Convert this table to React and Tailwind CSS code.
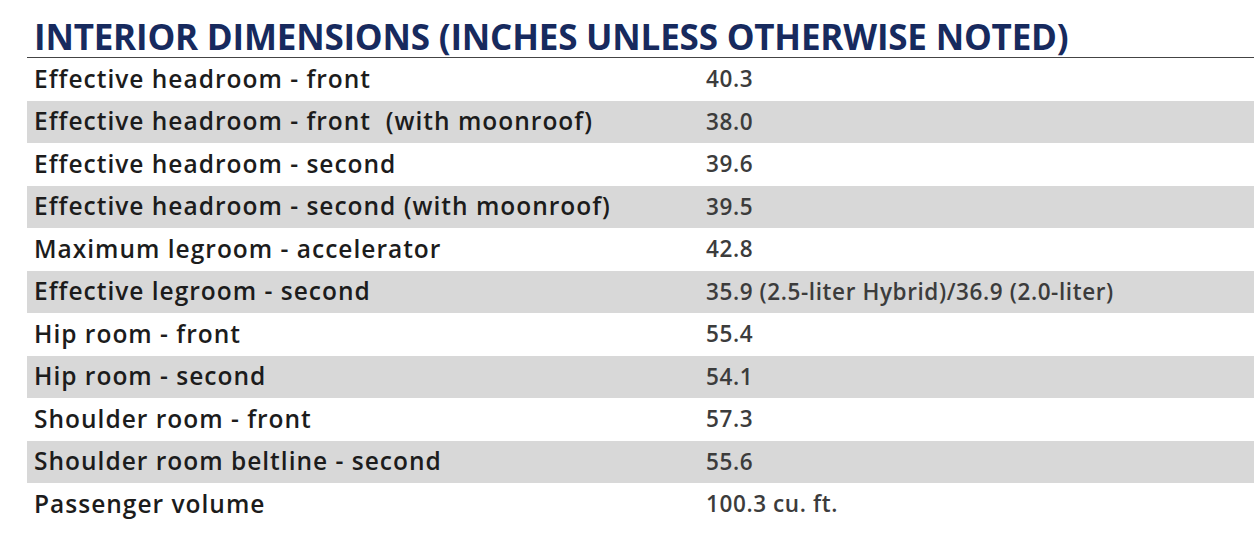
import React from 'react';

const ROWS = [
  ['Effective headroom - front', '40.3'],
  ['Effective headroom - front  (with moonroof)', '38.0'],
  ['Effective headroom - second', '39.6'],
  ['Effective headroom - second (with moonroof)', '39.5'],
  ['Maximum legroom - accelerator', '42.8'],
  ['Effective legroom - second', '35.9 (2.5-liter Hybrid)/36.9 (2.0-liter)'],
  ['Hip room - front', '55.4'],
  ['Hip room - second', '54.1'],
  ['Shoulder room - front', '57.3'],
  ['Shoulder room beltline - second', '55.6'],
  ['Passenger volume', '100.3 cu. ft.'],
];

export default function App() {
  return (
    <div className="w-[1254px] h-[540px] bg-white overflow-hidden" style={{ fontFamily: '"Open Sans", sans-serif' }}>
      <div className="pl-[27px] pt-[16px]">
        <h1 className="pl-[7px] h-[41px] text-[35px] leading-[41px] font-bold uppercase text-[#172a5e] tracking-[-0.2px] whitespace-nowrap">
          Interior Dimensions (Inches unless otherwise noted)
        </h1>
        <div className="border-t border-[#444]">
          {ROWS.map(([label, value], i) => (
            <div
              key={label}
              className={`flex items-center h-[42.5px] ${i % 2 === 1 ? 'bg-[#d8d8d8]' : 'bg-white'}`}
            >
              <div className="w-[679px] pl-[7px] text-[24.5px] font-semibold tracking-[1px] text-[#1c1c1c] whitespace-pre">{label}</div>
              <div className="text-[22.5px] font-semibold tracking-[0.6px] text-[#3c3c3c] whitespace-nowrap">{value}</div>
            </div>
          ))}
        </div>
      </div>
    </div>
  );
}
